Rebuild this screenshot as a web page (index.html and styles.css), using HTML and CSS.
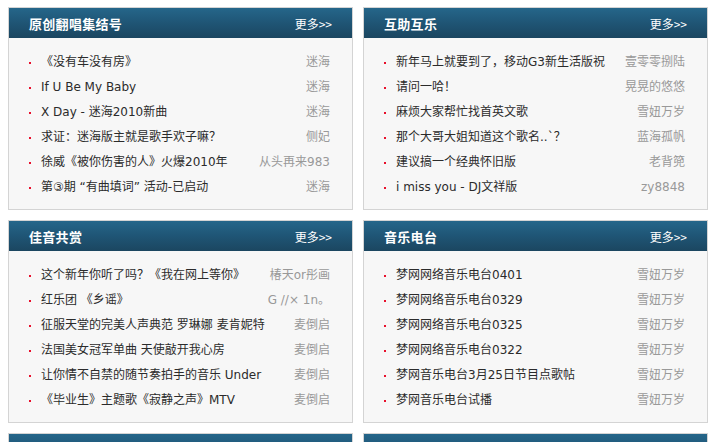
FILE: index.html
```html
<!DOCTYPE html>
<html>
<head>
<meta charset="utf-8">
<link rel="stylesheet" href="styles.css">
</head>
<body>
<div class="page">
  <div class="panel">
    <div class="head"><span class="title">原创翻唱集结号</span><a class="more">更多&gt;&gt;</a></div>
    <ul class="list">
      <li><span class="t">《没有车没有房》</span><span class="a">迷海</span></li>
      <li><span class="t">If U Be My Baby</span><span class="a">迷海</span></li>
      <li><span class="t">X Day - 迷海2010新曲</span><span class="a">迷海</span></li>
      <li><span class="t">求证：迷海版主就是歌手欢子嘛？</span><span class="a">侧妃</span></li>
      <li><span class="t">徐威《被你伤害的人》火爆2010年</span><span class="a">从头再来983</span></li>
      <li><span class="t">第③期 “有曲填词” 活动-已启动</span><span class="a">迷海</span></li>
    </ul>
  </div>
  <div class="panel">
    <div class="head"><span class="title">互助互乐</span><a class="more">更多&gt;&gt;</a></div>
    <ul class="list">
      <li><span class="t">新年马上就要到了，移动G3新生活版祝</span><span class="a">壹零零捌陆</span></li>
      <li><span class="t">请问一哈！</span><span class="a">晃晃的悠悠</span></li>
      <li><span class="t">麻烦大家帮忙找首英文歌</span><span class="a">雪妞万岁</span></li>
      <li><span class="t">那个大哥大姐知道这个歌名..`？</span><span class="a">蓝海孤帆</span></li>
      <li><span class="t">建议搞一个经典怀旧版</span><span class="a">老背篼</span></li>
      <li><span class="t">i miss you - DJ文祥版</span><span class="a">zy8848</span></li>
    </ul>
  </div>
  <div class="panel">
    <div class="head"><span class="title">佳音共赏</span><a class="more">更多&gt;&gt;</a></div>
    <ul class="list">
      <li><span class="t">这个新年你听了吗？《我在网上等你》</span><span class="a">椿天or彤画</span></li>
      <li><span class="t">红乐团 《乡谣》</span><span class="a">G //× 1n。</span></li>
      <li><span class="t">征服天堂的完美人声典范 罗琳娜 麦肯妮特</span><span class="a">麦倒启</span></li>
      <li><span class="t">法国美女冠军单曲 天使敲开我心房</span><span class="a">麦倒启</span></li>
      <li><span class="t">让你情不自禁的随节奏拍手的音乐 Under</span><span class="a">麦倒启</span></li>
      <li><span class="t">《毕业生》主题歌《寂静之声》MTV</span><span class="a">麦倒启</span></li>
    </ul>
  </div>
  <div class="panel">
    <div class="head"><span class="title">音乐电台</span><a class="more">更多&gt;&gt;</a></div>
    <ul class="list">
      <li><span class="t">梦网网络音乐电台0401</span><span class="a">雪妞万岁</span></li>
      <li><span class="t">梦网网络音乐电台0329</span><span class="a">雪妞万岁</span></li>
      <li><span class="t">梦网网络音乐电台0325</span><span class="a">雪妞万岁</span></li>
      <li><span class="t">梦网网络音乐电台0322</span><span class="a">雪妞万岁</span></li>
      <li><span class="t">梦网音乐电台3月25日节目点歌帖</span><span class="a">雪妞万岁</span></li>
      <li><span class="t">梦网音乐电台试播</span><span class="a">雪妞万岁</span></li>
    </ul>
  </div>
  <div class="panel">
    <div class="head"><span class="title">&nbsp;</span></div>
  </div>
  <div class="panel">
    <div class="head"><span class="title">&nbsp;</span></div>
  </div>
</div>
</body>
</html>
```

FILE: styles.css
```css
html, body {
  margin: 0;
  padding: 0;
  background: #fff;
  overflow: hidden;
}
body {
  font-family: "DejaVu Sans", "Noto Sans CJK SC", sans-serif;
  font-size: 12px;
  color: #333;
}
.page {
  display: grid;
  grid-template-columns: 345px 345px;
  column-gap: 10px;
  row-gap: 10px;
  padding: 7px 0 0 8px;
  height: 435px;
  overflow: hidden;
}
.panel {
  border: 1px solid #d4d4d4;
  background: #f7f7f7;
}
.head {
  height: 30px;
  background: linear-gradient(to bottom, #25668a 0%, #1f5575 50%, #1b4660 100%);
  display: flex;
  align-items: center;
  justify-content: space-between;
  padding: 0 20px;
  color: #fff;
}
.title {
  font-family: "Noto Sans CJK SC", sans-serif;
  font-size: 13px;
  font-weight: bold;
  letter-spacing: 0.3px;
}
.more {
  font-family: "Noto Sans CJK SC", sans-serif;
  font-size: 12px;
  color: #fff;
  text-decoration: none;
}
.list {
  list-style: none;
  margin: 0;
  padding: 12px 22px 9px 20px;
}
.list li {
  display: flex;
  align-items: center;
  height: 25px;
  line-height: 25px;
  white-space: nowrap;
}
.list li::before {
  content: "";
  width: 2px;
  height: 2px;
  background: #e8102c;
  margin-right: 10px;
  flex: none;
}
.t {
  flex: 1;
  overflow: hidden;
  color: #2b2b2b;
}
.a {
  color: #999;
  margin-left: 8px;
  flex: none;
}
```
